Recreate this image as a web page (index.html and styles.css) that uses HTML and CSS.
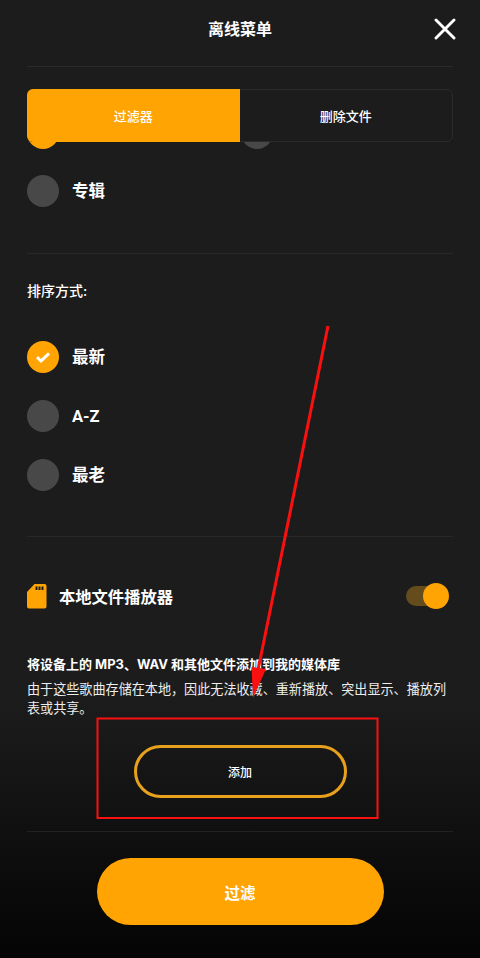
FILE: index.html
```html
<!DOCTYPE html>
<html lang="zh-CN">
<head>
<meta charset="utf-8">
<title>离线菜单</title>
<link rel="stylesheet" href="styles.css">
</head>
<body>
<div class="screen">
  <header class="header">
    <h1 class="title">离线菜单</h1>
    <svg class="close" width="22" height="22" viewBox="0 0 22 22"><path d="M2 2 L20 20 M20 2 L2 20" stroke="#fff" stroke-width="2.900" stroke-linecap="round" fill="none"/></svg>
  </header>
  <div class="tabs">
    <div class="tab tab-active">过滤器</div>
    <div class="tab">删除文件</div>
  </div>
  <div class="hidden-row">
    <span class="dot dot-on"></span>
    <span class="dot"></span>
  </div>
  <div class="option option-album"><span class="dot"></span><span class="label">专辑</span></div>
  <hr class="rule rule-a">
  <div class="section-label">排序方式:</div>
  <div class="sort-list">
    <div class="option"><span class="dot dot-on"><svg width="18" height="14" viewBox="0 0 18 14"><path d="M3 7.200 L7 11 L15 3.400" stroke="#fff" stroke-width="3" fill="none"/></svg></span><span class="label">最新</span></div>
    <div class="option"><span class="dot"></span><span class="label label-latin">A-Z</span></div>
    <div class="option"><span class="dot"></span><span class="label">最老</span></div>
  </div>
  <hr class="rule rule-b">
  <div class="local">
    <svg class="sd" width="20" height="25" viewBox="0 0 20 25"><path fill-rule="evenodd" fill="#ffa402" d="M7.500 0 H17.500 A2 2 0 0 1 19.500 2 V22.500 A2 2 0 0 1 17.500 24.500 H2 A2 2 0 0 1 0 22.500 V8 Z M8.500 2.500 V6 H10.500 V2.500 Z M11.500 2.500 V6 H13.500 V2.500 Z M14.500 2.500 V6 H16.500 V2.500 Z"/></svg>
    <span class="local-label">本地文件播放器</span>
    <span class="switch"><span class="switch-knob"></span></span>
  </div>
  <p class="desc-head">将设备上的 MP3、WAV 和其他文件添加到我的媒体库</p>
  <p class="desc">由于这些歌曲存储在本地，因此无法收藏、重新播放、突出显示、播放列表或共享。</p>
  <div class="add-wrap"><div class="btn-add">添加</div></div>
  <hr class="rule rule-c">
  <div class="filter-wrap"><div class="btn-filter">过滤</div></div>

  <svg class="annotation" width="480" height="958" viewBox="0 0 480 958">
    <path d="M328 326 L257 675" stroke="#fb1010" stroke-width="3" fill="none"/>
    <path d="M253 698 L251.500 667 L266 669 Z" fill="#fb1010"/>
    <rect x="97.500" y="718.500" width="280" height="99.500" stroke="#fb1010" stroke-width="2" fill="none"/>
  </svg>
</div>
</body>
</html>
```
FILE: styles.css
```css
* { box-sizing: border-box; }
html, body { margin: 0; padding: 0; }
body {
  background: #1c1c1c;
  color: #fff;
  font-family: "Inter", "Noto Sans CJK SC", sans-serif;
}
.screen {
  position: relative;
  width: 480px;
  height: 958px;
  padding: 0 27px;
  overflow: hidden;
  background: linear-gradient(to bottom, #1c1c1c 0, #1c1c1c 700px, #050505 945px, #050505 958px);
}
.header {
  position: relative;
  height: 67px;
  border-bottom: 1px solid #2b2b2b;
  margin-bottom: 22px;
  padding-top: 17px;
}
.title {
  margin: 0;
  font-size: 16px;
  font-weight: 700;
  line-height: 24px;
  text-align: center;
}
.close { position: absolute; right: -3px; top: 18px; }
.tabs {
  position: relative;
  z-index: 1;
  display: flex;
  height: 53px;
  background: #1c1c1c;
  border: 1px solid #2b2b2b;
  border-radius: 6px;
}
.tab {
  flex: 1;
  display: flex;
  align-items: center;
  justify-content: center;
  font-size: 13px;
  font-weight: 500;
}
.tab-active {
  margin: -1px 0 -1px -1px;
  background: #ffa402;
  border-radius: 6px 0 0 6px;
}
.hidden-row {
  display: grid;
  grid-template-columns: 214px 32px;
  margin-top: -25px;
  height: 32px;
}
.dot {
  display: flex;
  align-items: center;
  justify-content: center;
  flex: none;
  width: 32px;
  height: 32px;
  border-radius: 50%;
  background: #484848;
}
.dot-on { background: #ffa402; }
.option {
  display: flex;
  align-items: center;
  gap: 13px;
  height: 32px;
}
.option-album { margin-top: 26px; }
.label {
  font-size: 16.500px;
  font-weight: 700;
  line-height: 24px;
}
.label-latin { font-family: "Roboto", sans-serif; padding-top: 1px; }
.rule {
  margin: 0;
  border: 0;
  height: 1px;
  background: #282828;
}
.rule-a { margin-top: 46px; }
.section-label {
  margin-top: 26px;
  font-size: 14px;
  font-weight: 500;
  line-height: 22px;
}
.sort-list {
  display: flex;
  flex-direction: column;
  gap: 27px;
  margin-top: 39px;
}
.rule-b { margin-top: 45px; }
.local {
  display: flex;
  align-items: center;
  height: 32px;
  margin-top: 43px;
}
.sd { flex: none; }
.local-label {
  margin-left: 12px;
  margin-bottom: 1px;
  font-size: 16.300px;
  font-weight: 700;
}
.switch {
  position: relative;
  margin-left: auto;
  margin-right: 5px;
  width: 42px;
  height: 20px;
  border-radius: 10px;
  background: #654c1c;
}
.switch-knob {
  position: absolute;
  right: -1px;
  top: -3px;
  width: 26px;
  height: 26px;
  border-radius: 50%;
  background: #ffa402;
}
.desc-head {
  margin: 42px 0 0;
  font-size: 13px;
  font-weight: 700;
  line-height: 20px;
}
.desc {
  margin: 6px 0 0;
  font-size: 13.100px;
  font-weight: 400;
  line-height: 19px;
  color: #eee;
}
.add-wrap { display: flex; justify-content: center; margin-top: 27px; }
.btn-add {
  display: flex;
  align-items: center;
  justify-content: center;
  width: 213px;
  height: 53px;
  border: 3px solid #e8a11c;
  border-radius: 27px;
  font-size: 12px;
  font-weight: 500;
}
.rule-c { margin-top: 33px; background: #222; }
.filter-wrap { display: flex; justify-content: center; margin-top: 26px; }
.btn-filter {
  display: flex;
  align-items: center;
  justify-content: center;
  width: 287px;
  height: 67px;
  border-radius: 34px;
  background: #ffa402;
  font-size: 15.500px;
  font-weight: 700;
}
.annotation { position: absolute; left: 0; top: 0; z-index: 2; pointer-events: none; }
```
